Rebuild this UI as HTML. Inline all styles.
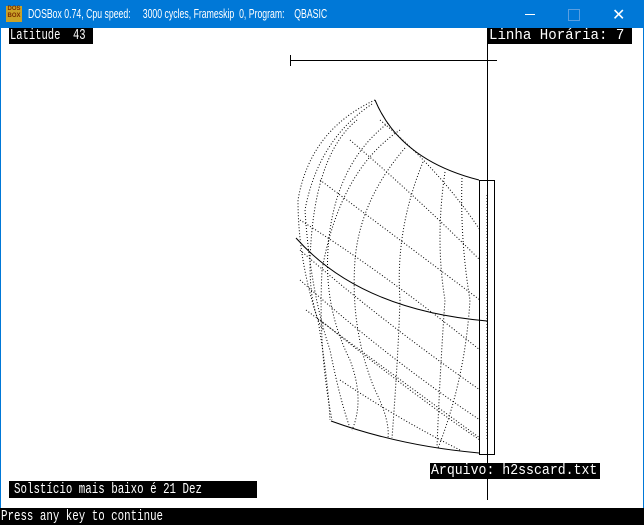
<!DOCTYPE html>
<html><head><meta charset="utf-8"><style>
html,body{margin:0;padding:0;width:644px;height:525px;overflow:hidden;background:#fff;font-family:"Liberation Mono",monospace}
.title{position:absolute;left:0;top:0;width:644px;height:28px;background:#0078d7;color:#fff;font-family:"Liberation Sans",sans-serif;font-size:13px}
.title .t{position:absolute;left:28px;top:6px;white-space:pre;transform-origin:0 0;transform:scaleX(0.67)}
.ic{position:absolute;left:6px;top:6px;width:16px;height:16px;background:#c9a227;color:#7a2a00;font-size:6px;line-height:7px;text-align:center;font-weight:bold}
.lbl{position:absolute;background:#000;color:#fff;height:16px;overflow:hidden}
.lbl span{position:absolute;top:-1px;font-size:15px;line-height:18px;white-space:pre;transform-origin:0 0}
.win{position:absolute;left:0;top:28px;width:642px;height:480px;border-left:1px solid #0078d7;border-right:1px solid #0078d7}
</style></head><body>
<div class="title"><div class="ic">DOS<br>BOX</div><span class="t">DOSBox 0.74, Cpu speed:     3000 cycles, Frameskip  0, Program:    QBASIC</span>
<span style="position:absolute;left:525px;top:14px;width:10px;height:1px;background:#fff"></span>
<span style="position:absolute;left:568px;top:9px;width:10px;height:10px;border:1px solid #5a9fe0"></span>
<span style="position:absolute;left:612px;top:5px;font-size:16px">&#x2715;</span></div>
<div class="win"></div>
<svg style="position:absolute;left:0;top:0" width="644" height="525">
<g fill="none" stroke="#000" stroke-width="1">
<line x1="487.5" y1="28" x2="487.5" y2="500"/>
<line x1="290" y1="60.5" x2="497" y2="60.5"/>
<line x1="290.5" y1="55" x2="290.5" y2="66"/>
<rect x="479.5" y="180.5" width="15" height="274"/>
<path d="M375 100 Q400 160 479 180"/>
<path d="M296 238 Q360 310 487 321"/>
<path d="M331 421 Q400 446 479 453"/>
</g>
<g fill="none" stroke="#000" stroke-width="1" stroke-dasharray="1 2">
<path d="M375 100 Q310 130 298 200 Q298 260 318 320 Q328 380 330 420"/>
<path d="M372 104 Q318 140 305 210 Q310 290 330 350 Q340 400 350 428"/>
<path d="M388 123 Q340 160 330 230 Q320 300 350 360 Q365 400 352 430"/>
<path d="M405 148 Q360 200 355 260 Q350 330 375 390 Q390 420 388 438"/>
<path d="M423 162 Q395 230 400 300 Q398 360 392 438"/>
<path d="M445 172 Q435 240 445 300 Q440 370 437 447"/>
<path d="M462 178 Q460 240 470 300 Q465 380 438 448"/>
<path d="M400 130 Q340 170 322 270 Q318 350 332 420"/>
<path d="M357 120 Q320 150 312 230 Q305 300 323 330"/>
<path d="M300 250 Q380 320 480 390"/>
<path d="M300 280 Q390 360 480 420"/>
<path d="M306 310 Q400 380 480 438"/>
<path d="M300 220 Q380 270 480 350"/>
<path d="M320 180 Q400 240 480 300"/>
<path d="M350 140 Q420 200 480 260"/>
<path d="M380 120 Q440 170 480 230"/>
<path d="M320 320 Q420 400 480 440"/>
<path d="M340 380 Q400 420 460 450"/>
<line x1="487" y1="195" x2="487" y2="440"/>
</g>
</svg>
<div class="lbl" style="left:9px;top:28px;width:84px"><span style="left:1px;transform:scaleX(0.70)">Latitude  43</span></div>
<div class="lbl" style="left:487px;top:28px;width:145px"><span style="left:2px;transform:scaleX(0.94)">Linha Horária: 7</span></div>
<div class="lbl" style="left:430px;top:463px;width:170px"><span style="left:1px;transform:scaleX(0.88)">Arquivo: h2sscard.txt</span></div>
<div class="lbl" style="left:9px;top:481px;width:248px;height:17px"><span style="left:5px;top:0;transform:scaleX(0.72)">Solstício mais baixo é 21 Dez</span></div>
<div class="lbl" style="left:0;top:508px;width:644px;height:17px"><span style="left:1px;top:0;transform:scaleX(0.72)">Press any key to continue</span></div>
</body></html>
